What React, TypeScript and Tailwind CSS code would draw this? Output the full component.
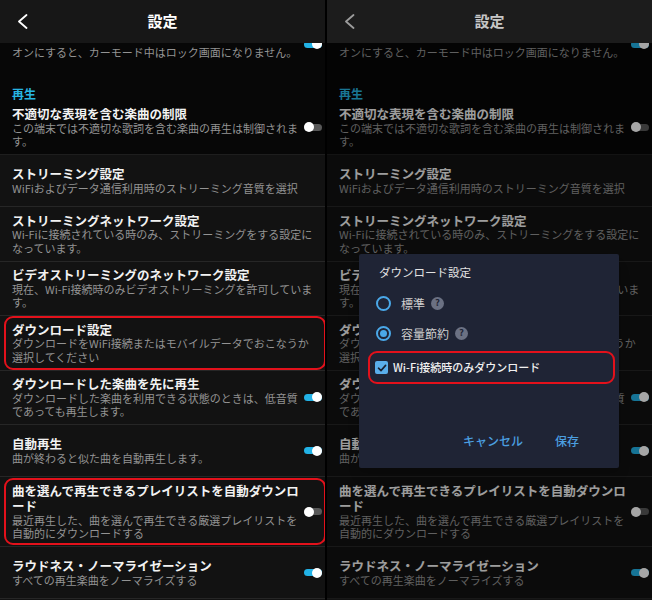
import React from 'react';

const font = { fontFamily: '"Noto Sans CJK JP", "Noto Sans", sans-serif' };

interface Row {
  title: string[];
  sub: string[];
  toggle?: boolean;
  mark?: boolean;
}

const rows: Row[] = [
  { title: ['不適切な表現を含む楽曲の制限'], sub: ['この端末では不適切な歌詞を含む楽曲の再生は制御されま', 'す。'], toggle: false },
  { title: ['ストリーミング設定'], sub: ['WiFiおよびデータ通信利用時のストリーミング音質を選択'] },
  { title: ['ストリーミングネットワーク設定'], sub: ['Wi-Fiに接続されている時のみ、ストリーミングをする設定に', 'なっています。'] },
  { title: ['ビデオストリーミングのネットワーク設定'], sub: ['現在、Wi-Fi接続時のみビデオストリーミングを許可していま', 'す。'] },
  { title: ['ダウンロード設定'], sub: ['ダウンロードをWiFi接続またはモバイルデータでおこなうか', '選択してください'], mark: true },
  { title: ['ダウンロードした楽曲を先に再生'], sub: ['ダウンロードした楽曲を利用できる状態のときは、低音質', 'であっても再生します。'], toggle: true },
  { title: ['自動再生'], sub: ['曲が終わると似た曲を自動再生します。'], toggle: true },
  { title: ['曲を選んで再生できるプレイリストを自動ダウンロ', 'ード'], sub: ['最近再生した、曲を選んで再生できる厳選プレイリストを', '自動的にダウンロードする'], toggle: false, mark: true },
  { title: ['ラウドネス・ノーマライゼーション'], sub: ['すべての再生楽曲をノーマライズする'], toggle: true },
];

const Toggle: React.FC<{ on: boolean }> = ({ on }) => (
  <div className={`relative flex h-[10px] w-[18px] items-center ${on ? 'justify-end' : 'justify-start'}`}>
    <div className={`absolute inset-x-0 h-[7px] rounded-full ${on ? 'bg-[#22b2e6]' : 'bg-[#585858]'}`} />
    <div className="relative h-[10px] w-[10px] rounded-full bg-white" />
  </div>
);

const SettingRow: React.FC<{ row: Row; first?: boolean; showMarks: boolean }> = ({ row, first, showMarks }) => (
  <div
    className={`relative flex min-h-[52px] items-center border-b py-[5.5px] pl-[12px] pr-[3px] ${
      first ? 'border-[#1e1e1e] bg-[#070707]' : 'border-[#262626] bg-[#121212]'
    }`}
  >
    <div className="flex-1">
      {row.title.map((t) => (
        <div key={t} className="whitespace-nowrap text-[12.5px] font-bold leading-[15.5px] text-[#f2f2f2]">
          {t}
        </div>
      ))}
      {row.sub.map((s) => (
        <div key={s} className="whitespace-nowrap text-[11px] leading-[13.5px] text-[#939393]">
          {s}
        </div>
      ))}
    </div>
    {row.toggle !== undefined && (
      <div className="shrink-0">
        <Toggle on={row.toggle} />
      </div>
    )}
    {showMarks && row.mark && (
      <div
        className={`pointer-events-none absolute left-[4px] right-[-1px] rounded-[9px] border-2 border-[#e3111b] ${
          row.title.length > 1 ? 'top-[1px] bottom-[1px]' : 'top-0 bottom-0'
        }`}
      />
    )}
  </div>
);

const Chevron: React.FC<{ color: string }> = ({ color }) => (
  <svg width="11" height="15" viewBox="0 0 11 15" fill="none">
    <polyline points="9.5,1 2,7.5 9.5,14" stroke={color} strokeWidth="1.8" strokeLinecap="round" strokeLinejoin="round" />
  </svg>
);

const Help = () => (
  <span className="flex h-[13px] w-[13px] items-center justify-center rounded-full bg-[#6b7183] text-[9.5px] font-bold leading-none text-[#1f2435]">
    ?
  </span>
);

const Radio: React.FC<{ checked: boolean }> = ({ checked }) => (
  <span className="flex h-[15px] w-[15px] items-center justify-center rounded-full border-2 border-[#4aa8e8]">
    {checked && <span className="h-[7px] w-[7px] rounded-full bg-[#4aa8e8]" />}
  </span>
);

const Dialog = () => (
  <div className="absolute left-[32px] top-[254px] flex h-[214px] w-[260px] flex-col rounded-[2px] bg-[#1f2435] shadow-lg">
    <div className="pl-[20px] pt-[11px] text-[11.5px] leading-[15px] text-[#e2e2e2]">ダウンロード設定</div>
    <div className="mt-[8px] flex h-[30px] items-center pl-[17px]">
      <Radio checked={false} />
      <span className="ml-[10px] mr-[6px] text-[12px] leading-[15px] text-[#cfcfcf]">標準</span>
      <Help />
    </div>
    <div className="flex h-[30px] items-center pl-[17px]">
      <Radio checked />
      <span className="ml-[10px] mr-[6px] text-[12px] leading-[15px] text-[#cfcfcf]">容量節約</span>
      <Help />
    </div>
    <div className="ml-[9px] mr-[4px] mt-[3px] flex h-[33px] items-center rounded-[9px] border-2 border-[#e3111b] pl-[5px]">
      <span className="flex h-[13px] w-[13px] items-center justify-center rounded-[2px] bg-[#5aaeea]">
        <svg width="10" height="10" viewBox="0 0 10 10" fill="none">
          <polyline points="1.5,5.2 4,7.6 8.6,2.4" stroke="#1a2030" strokeWidth="1.6" strokeLinecap="round" strokeLinejoin="round" />
        </svg>
      </span>
      <span className="ml-[5px] text-[11px] font-medium leading-[15px] text-[#f0f0f0]">Wi-Fi接続時のみダウンロード</span>
    </div>
    <div className="mt-auto flex justify-end gap-[32px] pb-[20px] pr-[40px] text-[12px] font-medium leading-[15px] text-[#4b9fe0]">
      <span>キャンセル</span>
      <span>保存</span>
    </div>
  </div>
);

const Panel: React.FC<{ dimmed?: boolean }> = ({ dimmed }) => (
  <div className="relative h-[600px] w-[325px] overflow-hidden bg-[#121212]">
    <div className={`grid h-[43px] grid-cols-[1fr_auto_1fr] items-center ${dimmed ? 'bg-[#1c1c1c]' : 'bg-[#171717]'}`}>
      <div className="pl-[17px]">
        <Chevron color={dimmed ? '#9c9c9c' : '#ffffff'} />
      </div>
      <div className={`text-[15px] font-bold ${dimmed ? 'text-[#c6c6c6]' : 'text-white'}`}>設定</div>
      <div />
    </div>
    <div className="relative">
      <div className="bg-[#070707]">
        <div className="flex h-[16px] items-start overflow-hidden pl-[12px] pr-[3px]">
          <div className="flex-1 whitespace-nowrap pt-[3px] text-[11px] leading-[13px] text-[#939393]">
            オンにすると、カーモード中はロック画面になりません。
          </div>
          <div className="-mt-[4px] shrink-0">
            <Toggle on />
          </div>
        </div>
        <div className="pl-[12px] pt-[26.5px] text-[12px] font-bold leading-[15px] text-[#27b5e2]">再生</div>
        <SettingRow row={rows[0]} first showMarks={!dimmed} />
      </div>
      {rows.slice(1).map((r) => (
        <SettingRow key={r.title[0]} row={r} showMarks={!dimmed} />
      ))}
      {dimmed && <div className="absolute inset-0 bg-black/35" />}
    </div>
    {dimmed && <Dialog />}
  </div>
);

export default function App() {
  return (
    <div className="flex h-[600px] w-[652px] gap-[2px] overflow-hidden bg-black" style={font}>
      <Panel />
      <Panel dimmed />
    </div>
  );
}
